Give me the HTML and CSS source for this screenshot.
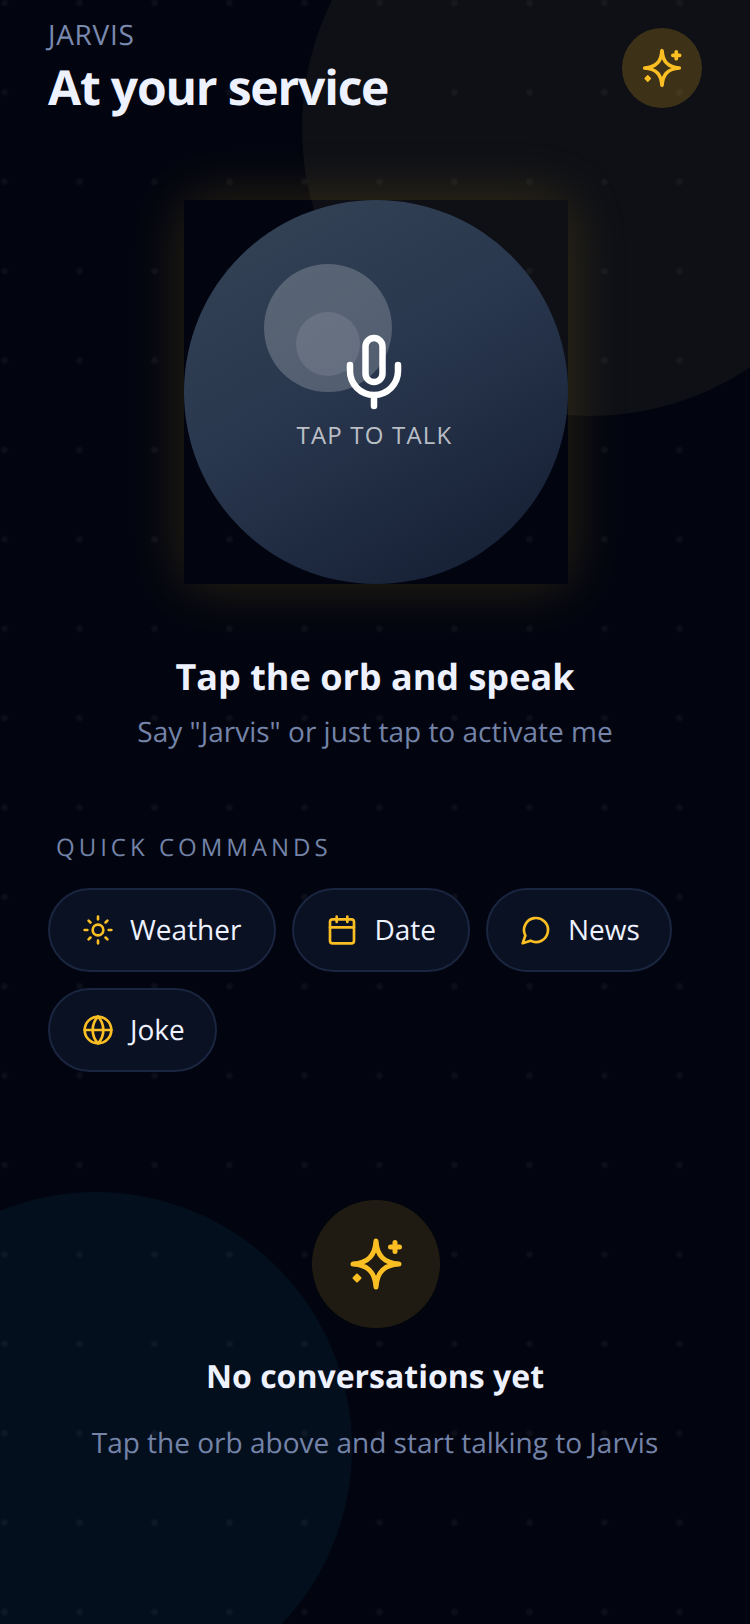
FILE: index.html
```html
<!DOCTYPE html>
<html lang="en">
<head>
    <meta charset="UTF-8">
    <meta name="viewport" content="width=device-width, initial-scale=1.0">
    <title>Jarvis</title>
    <link rel="stylesheet" href="styles.css">
</head>
<body>
    <div class="screen">
        <div class="blob blob-amber"></div>
        <div class="blob blob-blue"></div>
        <div class="dots"></div>

        <header class="top">
            <div>
                <p class="brand">JARVIS</p>
                <h1 class="title">At your service</h1>
            </div>
            <div class="top-btn">
                <svg class="star" width="48" height="48" viewBox="0 0 64 64">
                    <path class="star-line" d="M32 9C33 24 40 31 55 32C40 33 33 40 32 55C31 40 24 33 9 32C24 31 31 24 32 9Z"/>
                    <path class="star-line" d="M51 10.500v9M46.500 15h9"/>
                    <path class="star-dot" d="M13 42.500l3.500 3.500-3.500 3.500-3.500-3.500z"/>
                </svg>
            </div>
        </header>

        <section class="hero">
            <button type="button" class="orb">
                <span class="shine"></span>
                <span class="shine shine-small"></span>
                <svg class="mic" width="80" height="80" viewBox="0 0 80 80">
                    <rect x="31.500" y="7" width="17" height="44" rx="8.500"/>
                    <path d="M16 34v6a24 24 0 0 0 48 0v-6M40 64v11"/>
                </svg>
                <span class="orb-label">TAP TO TALK</span>
            </button>
        </section>

        <section class="prompt">
            <h2>Tap the orb and speak</h2>
            <p>Say "Jarvis" or just tap to activate me</p>
        </section>

        <section class="quick">
            <h3>QUICK COMMANDS</h3>
            <div class="chips">
                <div class="chip chip-wide">
                    <svg class="ico" width="32" height="32" viewBox="0 0 24 24">
                        <circle cx="12" cy="12" r="4"/>
                        <path d="M12 2v2M12 20v2M4.930 4.930l1.410 1.410M17.660 17.660l1.410 1.410M2 12h2M20 12h2M6.340 17.660l-1.410 1.410M19.070 4.930l-1.410 1.410"/>
                    </svg>
                    Weather
                </div>
                <div class="chip">
                    <svg class="ico" width="32" height="32" viewBox="0 0 24 24">
                        <rect x="3" y="4" width="18" height="18" rx="2"/>
                        <path d="M8 2v4M16 2v4M3 10h18"/>
                    </svg>
                    Date
                </div>
                <div class="chip chip-tight">
                    <svg class="ico" width="32" height="32" viewBox="0 0 24 24">
                        <path d="M7.900 20A9 9 0 1 0 4 16.100L2 22Z"/>
                    </svg>
                    News
                </div>
                <div class="chip chip-tight">
                    <svg class="ico" width="32" height="32" viewBox="0 0 24 24">
                        <circle cx="12" cy="12" r="10"/>
                        <path d="M12 2a14.500 14.500 0 0 0 0 20 14.500 14.500 0 0 0 0-20M2 12h20"/>
                    </svg>
                    Joke
                </div>
            </div>
        </section>

        <section class="empty">
            <div class="empty-icon">
                <svg class="star" width="64" height="64" viewBox="0 0 64 64">
                    <path class="star-line" d="M32 9C33 24 40 31 55 32C40 33 33 40 32 55C31 40 24 33 9 32C24 31 31 24 32 9Z"/>
                    <path class="star-line" d="M51 10.500v9M46.500 15h9"/>
                    <path class="star-dot" d="M13 42.500l3.500 3.500-3.500 3.500-3.500-3.500z"/>
                </svg>
            </div>
            <h4>No conversations yet</h4>
            <p>Tap the orb above and start talking to Jarvis</p>
        </section>
    </div>
</body>
</html>
```

FILE: styles.css
```css
* {
    box-sizing: border-box;
}
body {
    margin: 0;
    padding: 0;
    font-family: "Open Sans", Arial, sans-serif;
    text-rendering: geometricPrecision;
}
h1, h2, h3, h4, p {
    margin: 0;
}
.screen {
    position: relative;
    width: 750px;
    height: 1624px;
    overflow: hidden;
    background-color: #020510;
}

/* background decoration */
.blob {
    position: absolute;
    border-radius: 50%;
}
.blob-amber {
    top: -160px;
    right: -128px;
    width: 576px;
    height: 576px;
    background-color: rgba(250, 230, 130, 0.05);
}
.blob-blue {
    bottom: -80px;
    left: -160px;
    width: 512px;
    height: 512px;
    background-color: rgba(56, 189, 248, 0.06);
}
.dots {
    position: absolute;
    top: 0;
    left: 0;
    right: 0;
    bottom: 0;
    background-image: radial-gradient(circle, rgba(255, 255, 255, 0.045) 0, rgba(255, 255, 255, 0.04) 2px, transparent 4.5px);
    background-size: 75px 89.4px;
    background-position: -33px -41.7px;
}

/* header */
.top {
    position: relative;
    display: flex;
    justify-content: space-between;
    align-items: center;
    height: 135px;
    padding: 0 48px;
}
.brand {
    font-size: 28px;
    letter-spacing: 0.7px;
    color: #7a89ae;
}
.title {
    margin-top: 1px;
    font-size: 48px;
    font-weight: 700;
    letter-spacing: -1.2px;
    color: #eef2ff;
}
.top-btn {
    display: flex;
    justify-content: center;
    align-items: center;
    width: 80px;
    height: 80px;
    border-radius: 50%;
    background-color: rgba(251, 191, 36, 0.2);
}
.star-line {
    fill: none;
    stroke: #fbbf24;
    stroke-width: 5;
    stroke-linecap: round;
    stroke-linejoin: round;
}
.star-dot {
    fill: #fbbf24;
    stroke: #fbbf24;
    stroke-width: 2;
    stroke-linejoin: round;
}

/* orb */
.hero {
    position: relative;
    display: flex;
    justify-content: center;
    padding-left: 2px;
    margin-top: 65px;
}
.orb {
    position: relative;
    display: flex;
    flex-direction: column;
    justify-content: center;
    align-items: center;
    gap: 7px;
    width: 384px;
    height: 384px;
    padding: 0 3px 2px 0;
    border: none;
    background: none;
    box-shadow: 0 0 56px rgba(251, 191, 36, 0.18);
    font-family: inherit;
}
.orb::before {
    content: "";
    position: absolute;
    top: 0;
    left: 0;
    width: 100%;
    height: 100%;
    border-radius: 50%;
    background: linear-gradient(150deg, #334155 10%, #29374e 45%, #121b30 100%);
}
.shine {
    position: absolute;
    top: 64px;
    left: 80px;
    width: 128px;
    height: 128px;
    border-radius: 50%;
    background-color: rgba(255, 255, 255, 0.2);
}
.shine-small {
    top: 112px;
    left: 112px;
    width: 64px;
    height: 64px;
    background-color: rgba(255, 255, 255, 0.1);
}
.mic {
    position: relative;
    margin-right: 2px;
    fill: none;
    stroke: #fff;
    stroke-width: 6.5;
    stroke-linecap: round;
}
.orb-label {
    position: relative;
    font-size: 24px;
    letter-spacing: 1.2px;
    color: rgba(255, 255, 255, 0.7);
}

/* prompt */
.prompt {
    position: relative;
    margin-top: 68px;
    text-align: center;
}
.prompt h2 {
    font-size: 36px;
    font-weight: 700;
    color: #eef2ff;
}
.prompt p {
    margin-top: 12px;
    font-size: 28px;
    color: #7483a8;
}

/* quick commands */
.quick {
    position: relative;
    margin-top: 80px;
    padding: 0 48px;
}
.quick h3 {
    padding-left: 8px;
    font-size: 24px;
    font-weight: 400;
    letter-spacing: 4px;
    color: #7483a8;
}
.chips {
    display: flex;
    flex-wrap: wrap;
    gap: 16px;
    margin-top: 24px;
}
.chip {
    display: flex;
    align-items: center;
    gap: 16px;
    height: 84px;
    padding: 0 32px;
    border: 2px solid #1a2540;
    border-radius: 42px;
    background-color: #0a1122;
    font-size: 28px;
    color: #eef2ff;
}
.chip-wide {
    padding-right: 33px;
}
.chip-tight {
    padding-right: 30px;
}
.ico {
    fill: none;
    stroke: #fbbf24;
    stroke-width: 2;
    stroke-linecap: round;
    stroke-linejoin: round;
}

/* empty state */
.empty {
    position: relative;
    display: flex;
    flex-direction: column;
    align-items: center;
    margin-top: 128px;
    text-align: center;
}
.empty-icon {
    display: flex;
    justify-content: center;
    align-items: center;
    width: 128px;
    height: 128px;
    margin-left: 2px;
    border-radius: 50%;
    background-color: rgba(251, 191, 36, 0.12);
}
.empty h4 {
    margin-top: 27px;
    font-size: 32px;
    font-weight: 700;
    color: #eef2ff;
}
.empty p {
    margin-top: 26px;
    font-size: 28px;
    color: #7483a8;
}
```
